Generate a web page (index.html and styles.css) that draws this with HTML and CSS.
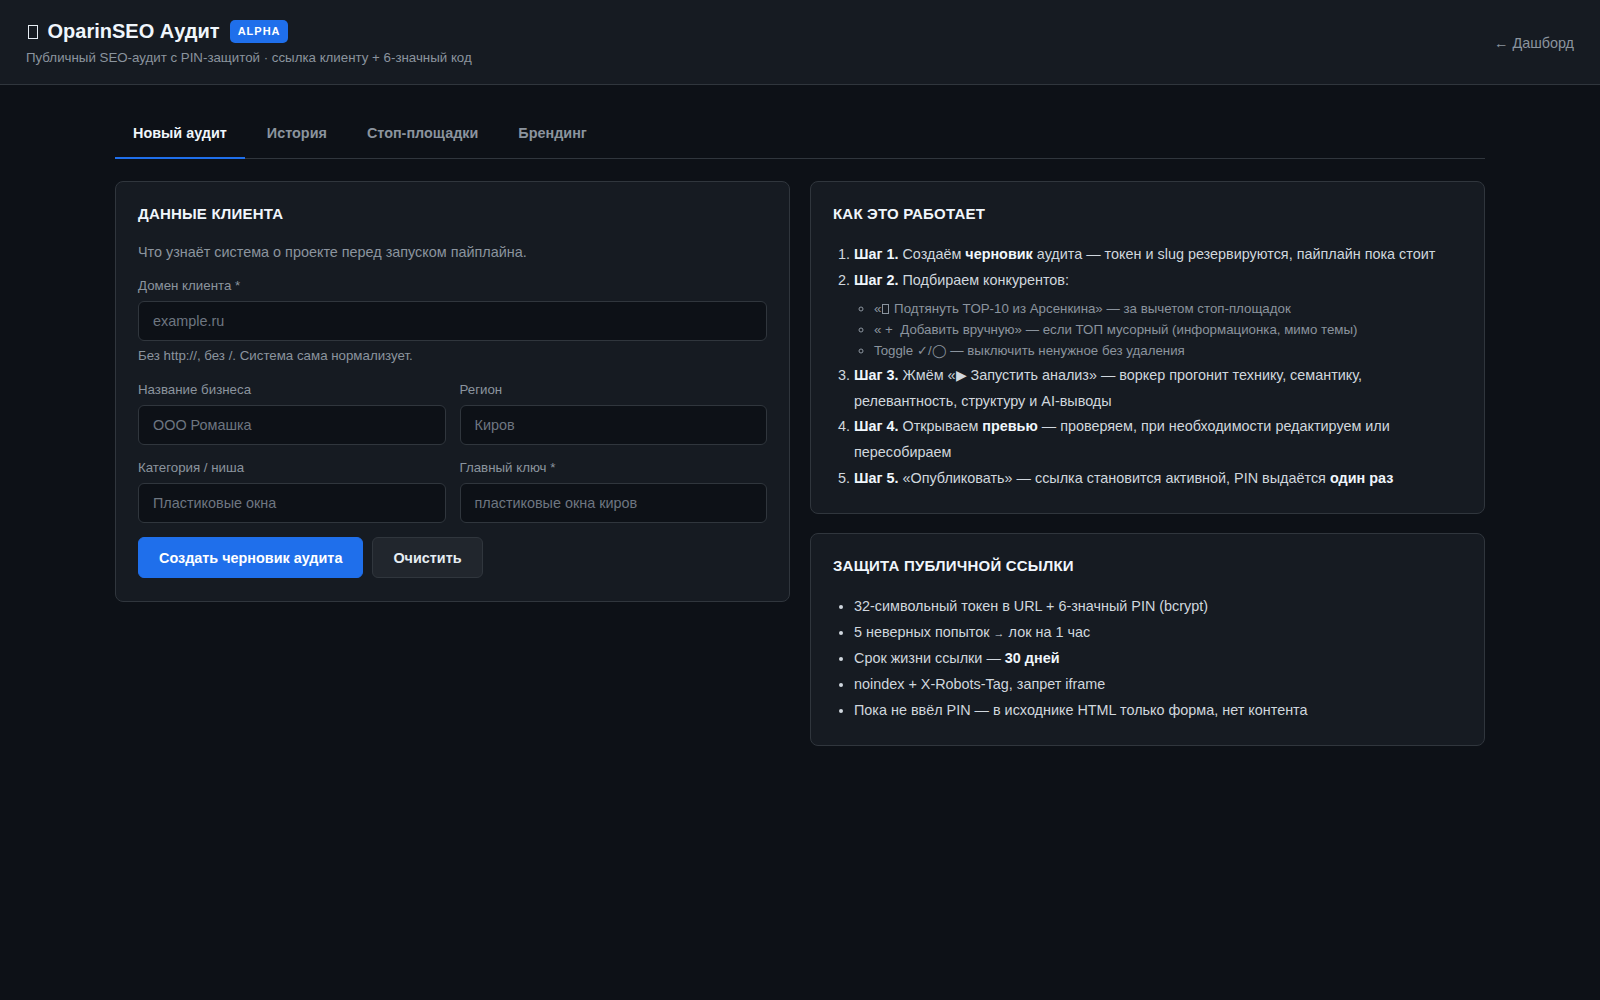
FILE: index.html
```html
<!DOCTYPE html>
<html lang="ru">
<head>
<meta charset="utf-8">
<title>OparinSEO Аудит</title>
<link rel="stylesheet" href="styles.css">
</head>
<body>
<header class="topbar">
  <div class="brand">
    <div class="brand-row">
      <h1 class="brand-title"><span class="tofu"></span> OparinSEO Аудит</h1>
      <span class="badge">ALPHA</span>
    </div>
    <div class="brand-sub">Публичный SEO-аудит с PIN-защитой · ссылка клиенту + 6-значный код</div>
  </div>
  <a class="back-link" href="#">← Дашборд</a>
</header>

<main class="container">
  <nav class="tabs">
    <a class="tab tab-active" href="#">Новый аудит</a>
    <a class="tab" href="#">История</a>
    <a class="tab" href="#">Стоп-площадки</a>
    <a class="tab" href="#">Брендинг</a>
  </nav>

  <div class="grid">
    <section class="card card-form">
      <h2 class="card-title">Данные клиента</h2>
      <p class="card-desc">Что узнаёт система о проекте перед запуском пайплайна.</p>

      <div class="field field-domain">
        <label class="label">Домен клиента *</label>
        <input class="input" type="text" placeholder="example.ru">
        <div class="hint">Без http://, без /. Система сама нормализует.</div>
      </div>

      <div class="row">
        <div class="field">
          <label class="label">Название бизнеса</label>
          <input class="input" type="text" placeholder="ООО Ромашка">
        </div>
        <div class="field">
          <label class="label">Регион</label>
          <input class="input" type="text" placeholder="Киров">
        </div>
      </div>

      <div class="row">
        <div class="field">
          <label class="label">Категория / ниша</label>
          <input class="input" type="text" placeholder="Пластиковые окна">
        </div>
        <div class="field">
          <label class="label">Главный ключ *</label>
          <input class="input" type="text" placeholder="пластиковые окна киров">
        </div>
      </div>

      <div class="actions">
        <button class="btn btn-primary" type="button">Создать черновик аудита</button>
        <button class="btn btn-secondary" type="button">Очистить</button>
      </div>
    </section>

    <div class="side">
      <section class="card">
        <h2 class="card-title">Как это работает</h2>
        <ol class="steps">
          <li><b>Шаг 1.</b> Создаём <b>черновик</b> аудита — токен и slug резервируются, пайплайн пока стоит</li>
          <li><b>Шаг 2.</b> Подбираем конкурентов:
            <ul class="substeps">
              <li>«<span class="tofu tofu-sm"></span> Подтянуть TOP-10 из Арсенкина» — за вычетом стоп-площадок</li>
              <li>« +&nbsp; Добавить вручную» — если ТОП мусорный (информационка, мимо темы)</li>
              <li>Toggle ✓/◯ — выключить ненужное без удаления</li>
            </ul>
          </li>
          <li><b>Шаг 3.</b> Жмём «▶ Запустить анализ» — воркер прогонит технику, семантику, релевантность, структуру и AI-выводы</li>
          <li><b>Шаг 4.</b> Открываем <b>превью</b> — проверяем, при необходимости редактируем или пересобираем</li>
          <li><b>Шаг 5.</b> «Опубликовать» — ссылка становится активной, PIN выдаётся <b>один раз</b></li>
        </ol>
      </section>

      <section class="card">
        <h2 class="card-title">Защита публичной ссылки</h2>
        <ul class="bullets">
          <li>32-символьный токен в URL + 6-значный PIN (bcrypt)</li>
          <li>5 неверных попыток <span class="arrow">→</span> лок на 1 час</li>
          <li>Срок жизни ссылки — <b>30 дней</b></li>
          <li>noindex + X-Robots-Tag, запрет iframe</li>
          <li>Пока не ввёл PIN — в исходнике HTML только форма, нет контента</li>
        </ul>
      </section>
    </div>
  </div>
</main>
</body>
</html>
```

FILE: styles.css
```css
* {
  box-sizing: border-box;
}

html, body {
  margin: 0;
  padding: 0;
}

body {
  background: #0d1117;
  color: #e6edf3;
  font-family: "Liberation Sans", Arial, sans-serif;
  font-size: 14.4px;
  min-height: 1000px;
}

.topbar {
  display: flex;
  justify-content: space-between;
  align-items: center;
  padding: 19px 26px 17px;
  background: #161b22;
  border-bottom: 1px solid #30363d;
}

.brand-row {
  display: flex;
  align-items: center;
  gap: 10px;
  height: 24px;
}

.brand-title {
  margin: 0;
  font-size: 20px;
  line-height: 24px;
  font-weight: 700;
  color: #f0f6fc;
}

.tofu {
  display: inline-block;
  width: 10px;
  height: 14px;
  border: 1.5px solid #e6edf3;
  margin: 0 4px 0 2px;
  vertical-align: -1px;
}

.tofu-sm {
  width: 7px;
  height: 10px;
  border-width: 1px;
  border-color: #8b949e;
  margin: 0 1px;
  vertical-align: -1px;
}

.badge {
  display: inline-block;
  background: #1f6feb;
  color: #ffffff;
  font-size: 11px;
  font-weight: 700;
  line-height: 13px;
  letter-spacing: 1px;
  padding: 5px 7px 5px 8px;
  border-radius: 5px;
}

.brand-sub {
  margin-top: 6px;
  font-size: 13.3px;
  line-height: 18px;
  color: #8b949e;
}

.back-link {
  color: #8b949e;
  text-decoration: none;
  font-size: 14.4px;
  line-height: 20px;
  margin-top: -1px;
}

.container {
  max-width: 1370px;
  margin: 0 auto;
  padding-top: 26px;
}

.tabs {
  display: flex;
  gap: 4px;
  border-bottom: 1px solid #30363d;
}

.tab {
  display: block;
  padding: 12px 18px 14px;
  font-size: 14.4px;
  font-weight: 700;
  line-height: 20px;
  color: #8b949e;
  text-decoration: none;
  border-bottom: 2px solid transparent;
  margin-bottom: -1px;
}

.tab-active {
  color: #f0f6fc;
  border-bottom-color: #1f6feb;
}

.grid {
  display: grid;
  grid-template-columns: 1fr 1fr;
  gap: 20px;
  align-items: start;
  margin-top: 22px;
}

.side {
  display: flex;
  flex-direction: column;
  gap: 19px;
}

.card {
  background: #161b22;
  border: 1px solid #30363d;
  border-radius: 8px;
  padding: 22px;
}

.card-form {
  padding-bottom: 23px;
}

.card-title {
  margin: 0 0 18px;
  font-size: 15px;
  line-height: 20px;
  font-weight: 700;
  text-transform: uppercase;
  letter-spacing: 0.2px;
  color: #f0f6fc;
}

.card-desc {
  margin: 0 0 15px;
  font-size: 14.4px;
  line-height: 20px;
  color: #8b949e;
}

.field {
  display: flex;
  flex-direction: column;
}

.label {
  font-size: 13.3px;
  line-height: 18px;
  color: #8b949e;
  margin-bottom: 6px;
}

.input {
  height: 40px;
  width: 100%;
  background: #0d1117;
  border: 1px solid #30363d;
  border-radius: 6px;
  padding: 0 14px;
  font-family: "Liberation Sans", Arial, sans-serif;
  font-size: 14.4px;
  color: #e6edf3;
  outline: none;
}

.input::placeholder {
  color: #6e7681;
}

.hint {
  margin-top: 6px;
  font-size: 13.3px;
  line-height: 18px;
  color: #8b949e;
}

.field-domain {
  margin-bottom: 16px;
}

.row {
  display: grid;
  grid-template-columns: 1fr 1fr;
  gap: 14px;
  margin-bottom: 14px;
}

.actions {
  display: flex;
  gap: 9px;
  margin-top: 1px;
}

.btn {
  height: 41px;
  border-radius: 6px;
  padding: 0 20px;
  font-family: "Liberation Sans", Arial, sans-serif;
  font-size: 14.4px;
  font-weight: 700;
  cursor: pointer;
}

.btn-primary {
  background: #1f6feb;
  border: 1px solid #1f6feb;
  color: #ffffff;
}

.btn-secondary {
  background: #21262d;
  border: 1px solid #30363d;
  color: #e6edf3;
}

.steps {
  margin: 0;
  padding-left: 21px;
  font-size: 14.4px;
  line-height: 25.6px;
  color: #d0d7de;
}

.steps b,
.bullets b {
  color: #f0f6fc;
}

.substeps {
  margin: 5px 0 2px;
  padding-left: 20px;
  list-style: circle;
  font-size: 13.3px;
  line-height: 21px;
  color: #8b949e;
}

.bullets {
  margin: 0;
  padding-left: 21px;
  font-size: 14.4px;
  line-height: 25.6px;
  color: #d0d7de;
}

.arrow {
  font-size: 11px;
}
```
